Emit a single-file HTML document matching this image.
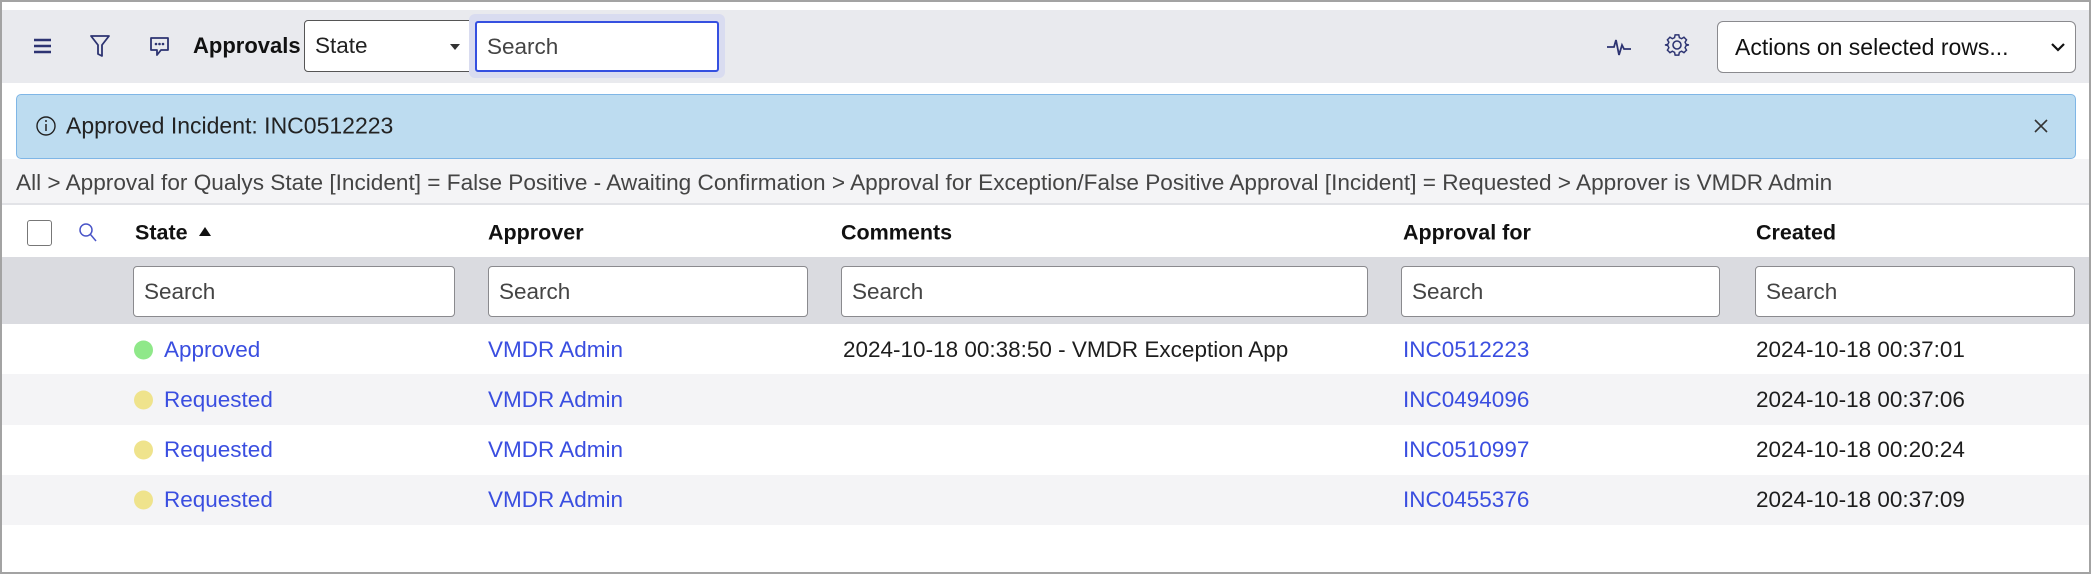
<!DOCTYPE html>
<html><head><meta charset="utf-8"><style>
*{box-sizing:border-box;margin:0;padding:0}
body{width:2091px;height:574px;overflow:hidden;background:#fff;font-family:"Liberation Sans",sans-serif;color:#1d1d1d;position:relative}
.frame{position:absolute;left:0;top:0;width:2091px;height:574px;border:2px solid #a3a3a3}
.abs{position:absolute}
.tb{left:2px;top:10px;width:2087px;height:73px;background:#e9eaee}
.inp{background:#fff;border:1px solid #8a8a8e;border-radius:4px;font-size:22.5px;color:#444;padding-left:10px;display:flex;align-items:center}
.t{position:absolute;white-space:nowrap;font-size:22.5px;transform:translateY(-50%)}
.lnk{color:#3a4ee0}
.b{font-weight:bold;color:#111;font-size:21.5px}
.dot{position:absolute;width:19px;height:19px;border-radius:50%;transform:translateY(-50%)}
</style></head><body>
<div class="abs tb"></div>
<svg class="abs" style="left:33px;top:38px" width="19" height="16"><g stroke="#2d3472" stroke-width="2.4"><line x1="1" y1="2" x2="18" y2="2"/><line x1="1" y1="8" x2="18" y2="8"/><line x1="1" y1="14" x2="18" y2="14"/></g></svg>
<svg class="abs" style="left:89px;top:34px" width="22" height="25"><path d="M2 2 H20 L13 11 V22 L9 20 V11 Z" fill="none" stroke="#2d3472" stroke-width="1.8" stroke-linejoin="round"/></svg>
<svg class="abs" style="left:148px;top:35px" width="24" height="24"><path d="M3 3 H20 V15 H13 L9 20 V15 H3 Z" fill="none" stroke="#2d3472" stroke-width="1.8" stroke-linejoin="round"/><g fill="#2d3472"><circle cx="8" cy="9" r="1.3"/><circle cx="11.5" cy="9" r="1.3"/><circle cx="15" cy="9" r="1.3"/></g></svg>
<div class="t b" style="left:193px;top:46px;font-size:22px">Approvals</div>
<div class="abs inp" style="left:304px;top:20px;width:171px;height:52px;border-radius:4px 0 0 4px;border-color:#555;color:#222">State</div>
<svg class="abs" style="left:450px;top:44px" width="10" height="6"><path d="M0 0 H10 L5 6 Z" fill="#333"/></svg>
<div class="abs" style="left:469px;top:14px;width:256px;height:64px;background:#d9dcf0;border-radius:6px"></div>
<div class="abs inp" style="left:475px;top:21px;width:244px;height:51px;border:2.5px solid #3550e0;border-radius:3px;color:#444">Search</div>
<svg class="abs" style="left:1606px;top:35px" width="26" height="24"><path d="M1 12 H8 L10 5 L13 20 L16 10 L18 14 H25" fill="none" stroke="#2d3472" stroke-width="1.8"/></svg>
<svg class="abs" style="left:1664px;top:33px" width="26" height="26" viewBox="0 0 26 26"><path d="M11 2h4l.6 3 2.4 1.2 2.6-1.6 2.8 2.8-1.6 2.6L23 12.4l3 .6v0l-3 .6-1.2 2.4 1.6 2.6-2.8 2.8-2.6-1.6-2.4 1.2L15 24h-4l-.6-3-2.4-1.2-2.6 1.6-2.8-2.8 1.6-2.6L3 13.6 0 13l3-.6 1.2-2.4-1.6-2.6 2.8-2.8 2.6 1.6L10.4 5z" fill="none" stroke="#2d3472" stroke-width="1.6" transform="translate(1 0) scale(.92)"/><circle cx="13" cy="12" r="4" fill="none" stroke="#2d3472" stroke-width="1.6"/></svg>
<div class="abs inp" style="left:1717px;top:21px;width:359px;height:52px;border-radius:6px;color:#111;padding-left:17px;font-size:23px">Actions on selected rows...</div>
<svg class="abs" style="left:2051px;top:43px" width="14" height="9"><path d="M1 1 L7 7 L13 1" fill="none" stroke="#111" stroke-width="2.2"/></svg>
<div class="abs" style="left:16px;top:94px;width:2060px;height:65px;background:#bddcf0;border:1.5px solid #7fb6e6;border-radius:5px"></div>
<svg class="abs" style="left:35px;top:115px" width="22" height="22"><circle cx="11" cy="11" r="9" fill="none" stroke="#222" stroke-width="1.4"/><line x1="11" y1="9" x2="11" y2="16" stroke="#222" stroke-width="1.5"/><circle cx="11" cy="6" r="1" fill="#222"/></svg>
<div class="t" style="left:66px;top:126px;font-size:23px;color:#222">Approved Incident: INC0512223</div>
<svg class="abs" style="left:2034px;top:119px" width="14" height="14"><path d="M1 1L13 13M13 1L1 13" stroke="#333" stroke-width="1.6"/></svg>
<div class="abs" style="left:2px;top:159px;width:2087px;height:46px;background:#f4f4f6;border-bottom:2px solid #e2e3e7"></div>
<div class="t" style="left:16px;top:183px;font-size:22.6px;color:#444">All &gt; Approval for Qualys State [Incident] = False Positive - Awaiting Confirmation &gt; Approval for Exception/False Positive Approval [Incident] = Requested &gt; Approver is VMDR Admin</div>
<div class="abs" style="left:27px;top:220px;width:25px;height:26px;border:1.5px solid #777;border-radius:3px;background:#fff"></div>
<svg class="abs" style="left:78px;top:222px" width="20" height="22"><circle cx="8" cy="8" r="6" fill="none" stroke="#4a55c8" stroke-width="1.5"/><line x1="12.5" y1="12.5" x2="18" y2="19" stroke="#4a55c8" stroke-width="1.5"/></svg>
<div class="t b" style="left:135px;top:233px">State</div>
<svg class="abs" style="left:199px;top:227px" width="12" height="9"><path d="M0 9 L6 0 L12 9Z" fill="#111"/></svg>
<div class="t b" style="left:488px;top:233px">Approver</div>
<div class="t b" style="left:841px;top:233px">Comments</div>
<div class="t b" style="left:1403px;top:233px">Approval for</div>
<div class="t b" style="left:1756px;top:233px">Created</div>
<div class="abs" style="left:2px;top:257px;width:2087px;height:67px;background:#dadbe0"></div>
<div class="abs inp" style="left:133px;top:266px;width:322px;height:51px">Search</div>
<div class="abs inp" style="left:488px;top:266px;width:320px;height:51px">Search</div>
<div class="abs inp" style="left:841px;top:266px;width:527px;height:51px">Search</div>
<div class="abs inp" style="left:1401px;top:266px;width:319px;height:51px">Search</div>
<div class="abs inp" style="left:1755px;top:266px;width:320px;height:51px">Search</div>
<div class="abs" style="left:2px;top:374px;width:2087px;height:51px;background:#f4f4f6"></div>
<div class="abs" style="left:2px;top:475px;width:2087px;height:50px;background:#f4f4f6"></div>
<div class="dot" style="left:134px;top:350px;background:#8fe889"></div>
<div class="dot" style="left:134px;top:400px;background:#efe38c"></div>
<div class="dot" style="left:134px;top:450px;background:#efe38c"></div>
<div class="dot" style="left:134px;top:500px;background:#efe38c"></div>
<div class="t lnk" style="left:164px;top:350px">Approved</div>
<div class="t lnk" style="left:164px;top:400px">Requested</div>
<div class="t lnk" style="left:164px;top:450px">Requested</div>
<div class="t lnk" style="left:164px;top:500px">Requested</div>
<div class="t lnk" style="left:488px;top:350px">VMDR Admin</div>
<div class="t lnk" style="left:488px;top:400px">VMDR Admin</div>
<div class="t lnk" style="left:488px;top:450px">VMDR Admin</div>
<div class="t lnk" style="left:488px;top:500px">VMDR Admin</div>
<div class="t" style="left:843px;top:350px">2024-10-18 00:38:50 - VMDR Exception App</div>
<div class="t lnk" style="left:1403px;top:350px">INC0512223</div>
<div class="t lnk" style="left:1403px;top:400px">INC0494096</div>
<div class="t lnk" style="left:1403px;top:450px">INC0510997</div>
<div class="t lnk" style="left:1403px;top:500px">INC0455376</div>
<div class="t" style="left:1756px;top:350px">2024-10-18 00:37:01</div>
<div class="t" style="left:1756px;top:400px">2024-10-18 00:37:06</div>
<div class="t" style="left:1756px;top:450px">2024-10-18 00:20:24</div>
<div class="t" style="left:1756px;top:500px">2024-10-18 00:37:09</div>
<div class="frame"></div>
</body></html>
